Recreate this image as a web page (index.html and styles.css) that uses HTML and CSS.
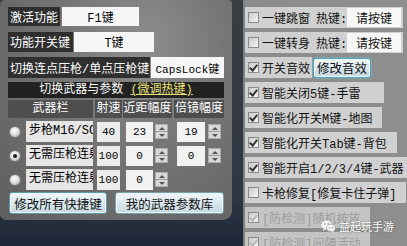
FILE: index.html
```
<!DOCTYPE html>
<html>
<head>
<meta charset="utf-8">
<link rel="stylesheet" href="styles.css">
</head>
<body>
<div class="screen">
  <div class="left-col">
    <div class="panel">
      <div class="row r1"><span class="lbl w1">激活功能</span><span class="inp i1">F1键</span></div>
      <div class="row r2"><span class="lbl w2">功能开关键</span><span class="inp i2">T键</span></div>
      <div class="row r3"><span class="lbl w3">切换连点压枪/单点压枪键</span><span class="inp i3">CapsLock键</span></div>
      <div class="hdr">切换武器与参数 <span class="hot">(微调热键)</span></div>
      <div class="cols">
        <span class="ch c-w">武器栏</span>
        <span class="ch c-r">射速</span>
        <span class="ch c-n">近距幅度</span>
        <span class="ch c-s">倍镜幅度</span>
      </div>
      <div class="wrow">
        <span class="radio-cell"><span class="radio"></span></span>
        <span class="name">步枪M16/SCAR</span>
        <span class="num rate">40</span>
        <span class="num near">23</span><span class="spin"><span class="up"></span><span class="dn"></span></span>
        <span class="num scope">19</span><span class="spin"><span class="up"></span><span class="dn"></span></span>
      </div>
      <div class="wrow">
        <span class="radio-cell"><span class="radio on"></span></span>
        <span class="name">无需压枪连射</span>
        <span class="num rate">100</span>
        <span class="num near">0</span><span class="spin"><span class="up"></span><span class="dn"></span></span>
        <span class="num scope">0</span><span class="spin"><span class="up"></span><span class="dn"></span></span>
      </div>
      <div class="wrow">
        <span class="radio-cell"><span class="radio"></span></span>
        <span class="name">无需压枪连射</span>
        <span class="num rate">100</span>
        <span class="num near">0</span><span class="spin"><span class="up"></span><span class="dn"></span></span>
      </div>
      <div class="btns">
        <span class="btn b1">修改所有快捷键</span>
        <span class="btn b2">我的武器参数库</span>
      </div>
    </div>
  </div>
  <div class="right">
    <div class="rrow wide"><span class="cb"></span><span class="rt">一键跳窗</span><span class="rt hk">热键:</span><span class="rinp">请按键</span></div>
    <div class="rrow wide"><span class="cb"></span><span class="rt">一键转身</span><span class="rt hk">热键:</span><span class="rinp">请按键</span></div>
    <div class="rline"><div class="rrow"><span class="cb on"></span><span class="rt">开关音效</span></div><span class="btn snd">修改音效</span></div>
    <div class="rrow pr"><span class="cb on"></span><span class="rt">智能关闭5键-手雷</span></div>
    <div class="rrow"><span class="cb on"></span><span class="rt">智能化开关M键-地图</span></div>
    <div class="rrow"><span class="cb on"></span><span class="rt">智能化开关Tab键-背包</span></div>
    <div class="rrow"><span class="cb on"></span><span class="rt">智能开启1/2/3/4键-武器</span></div>
    <div class="rrow"><span class="cb"></span><span class="rt">卡枪修复[修复卡住子弹]</span></div>
    <div class="rrow dis"><span class="cb on"></span><span class="rt">[防检测]随机按放</span></div>
    <div class="rrow dis"><span class="cb on"></span><span class="rt">[防检测]间隔活动</span></div>
  </div>
  <div class="wm">
    <svg width="15" height="13" viewBox="0 0 15 13"><ellipse cx="5.5" cy="5" rx="5.3" ry="4.4" fill="#fff" fill-opacity="0.85"/><path d="M2.5 8.3 L2 11 L4.6 9.2Z" fill="#fff" fill-opacity="0.85"/><ellipse cx="10" cy="8" rx="4.6" ry="3.8" fill="#fff" fill-opacity="0.85" stroke="#8a8a8a" stroke-width="0.6"/><path d="M12.4 10.8 L13.2 12.8 L10.8 11.4Z" fill="#fff" fill-opacity="0.85"/><circle cx="3.8" cy="4" r="0.7" fill="#777"/><circle cx="7.2" cy="4" r="0.7" fill="#777"/><circle cx="8.6" cy="7.6" r="0.6" fill="#777"/><circle cx="11.4" cy="7.6" r="0.6" fill="#777"/></svg>
    <span>益起玩手游</span>
  </div>
</div>
</body>
</html>
```
FILE: styles.css
```
html, body {
  margin: 0;
  padding: 0;
}
body {
  width: 407px;
  height: 246px;
  overflow: hidden;
  font-family: "Liberation Mono", "Noto Sans CJK SC", monospace;
  font-size: 12px;
}
.screen {
  position: relative;
  width: 407px;
  height: 246px;
  display: flex;
  background: linear-gradient(to bottom, #3c3f44 0%, #343a44 60%, #1e2a3a 100%);
}
.left-col {
  width: 243px;
  height: 246px;
  background: linear-gradient(to bottom, #3a3d42 0%, #2e3744 80%, #1c2636 100%);
}
.panel {
  width: 232px;
  height: 220px;
  box-sizing: border-box;
  padding: 7px 8px 0 8px;
  border-radius: 5px 4px 9px 6px;
  background: radial-gradient(ellipse at 62% 22%, #8e8e8e 0%, #767676 40%, #5e5e5e 100%);
  color: #fff;
}
.row {
  display: flex;
  align-items: stretch;
}
.r1 { height: 19px; margin-bottom: 6px; }
.r2 { height: 20px; margin-bottom: 5px; }
.r3 { height: 21px; margin-bottom: 4px; }
.lbl {
  background: #2f2f2f;
  color: #fff;
  padding-left: 2px;
  box-sizing: border-box;
  display: flex;
  align-items: center;
  white-space: nowrap;
  font-size: 12px;
}
.w1 { width: 52px; }
.w2 { width: 65px; }
.w3 { width: 143px; }
.inp {
  background: #f6f6f6;
  color: #000;
  display: flex;
  align-items: center;
  justify-content: center;
  white-space: nowrap;
}
.i1 { width: 77px; margin-left: 2px; }
.i2 { width: 80px; margin-left: 1px; }
.i3 { width: 74px; margin-left: 1px; font-size: 11px; }
.hdr {
  height: 16px;
  margin-bottom: 2px;
  background: #222;
  color: #fff;
  text-align: center;
  line-height: 16px;
  font-size: 12px;
}
.hot {
  color: #ece27a;
  text-decoration: underline;
}
.cols {
  height: 18px;
  margin-bottom: 3px;
  display: flex;
}
.ch {
  background: #4e4e4e;
  color: #fff;
  text-align: center;
  line-height: 18px;
  font-size: 12px;
  white-space: nowrap;
}
.c-w { width: 85px; }
.c-r { width: 27px; margin-left: 2px; }
.c-n { width: 49px; margin-left: 1px; }
.c-s { width: 50px; margin-left: 2px; }
.wrow {
  height: 21px;
  margin-bottom: 3px;
  display: flex;
  align-items: center;
}
.radio-cell {
  width: 18px;
  display: flex;
  align-items: center;
  padding-left: 1px;
  box-sizing: border-box;
}
.radio {
  width: 12px;
  height: 12px;
  box-sizing: border-box;
  border-radius: 50%;
  border: 1px solid #7a7a7a;
  background: radial-gradient(circle at 40% 35%, #ffffff 0%, #d8d8d8 55%, #a8a8a8 100%);
  position: relative;
}
.radio.on::after {
  content: "";
  position: absolute;
  left: 3px;
  top: 3px;
  width: 4px;
  height: 4px;
  border-radius: 50%;
  background: #1a1a1a;
}
.name {
  width: 67px;
  height: 21px;
  box-sizing: border-box;
  padding-left: 3px;
  background: #e6e6e6;
  color: #000;
  line-height: 21px;
  white-space: nowrap;
  overflow: hidden;
  font-size: 12px;
  flex: none;
}
.num {
  height: 20px;
  background: #f2f2f2;
  color: #000;
  display: flex;
  align-items: center;
  justify-content: center;
  font-size: 11px;
  flex: none;
}
.rate { width: 23px; margin-left: 4px; background: #ececec; }
.near { width: 27px; margin-left: 6px; }
.scope { width: 28px; margin-left: 9px; }
.spin {
  width: 13px;
  height: 15px;
  margin-left: 2px;
  box-sizing: border-box;
  border: 1px solid #ababab;
  background: #d8d8d8;
  display: flex;
  flex-direction: column;
  flex: none;
}
.scope + .spin { margin-left: 3px; }
.spin .up, .spin .dn {
  flex: 1;
  display: flex;
  align-items: center;
  justify-content: center;
}
.spin .up { border-bottom: 1px solid #9a9a9a; }
.spin .up::before {
  content: "";
  border-left: 3px solid transparent;
  border-right: 3px solid transparent;
  border-bottom: 3px solid #555;
}
.spin .dn::before {
  content: "";
  border-left: 3px solid transparent;
  border-right: 3px solid transparent;
  border-top: 3px solid #555;
}
.btns {
  margin-top: -1px;
  height: 22px;
  display: flex;
}
.btn {
  height: 22px;
  box-sizing: border-box;
  border: 1px solid #5f9aa9;
  border-radius: 3px;
  background: linear-gradient(to bottom, #f1f7f9 0%, #dbe8ed 50%, #c5d8df 100%);
  box-shadow: inset 0 0 0 1px #eaf6f9;
  color: #111;
  display: flex;
  align-items: center;
  justify-content: center;
  font-size: 12.5px;
  white-space: nowrap;
}
.b1 { width: 98px; margin-left: 1px; }
.b2 { width: 109px; margin-left: 8px; border-color: #7a9ea8; }
.right {
  width: 164px;
  height: 246px;
  box-sizing: border-box;
  padding-top: 7px;
  background: linear-gradient(to right, #7a7a7a 0px, #8c8c8c 3px, #8e8e8e 100%);
  color: #111;
}
.rrow {
  height: 21px;
  margin: 0 0 4px 2px;
  padding: 0 10px 0 3px;
  width: fit-content;
  display: flex;
  align-items: center;
  background: #d0d0d0;
  white-space: nowrap;
  font-size: 12px;
}
.rrow.wide {
  width: 158px;
  box-sizing: border-box;
  padding-right: 2px;
}
.rrow.pr { padding-right: 24px; }
.rline {
  display: flex;
  align-items: center;
  margin-bottom: 4px;
  height: 21px;
}
.rline .rrow { margin-bottom: 0; padding-right: 2px; }
.rt { margin-left: 3px; }
.hk { margin-left: 6px; }
.rinp {
  margin-left: auto;
  width: 56px;
  height: 19px;
  background: #f7f7f7;
  display: flex;
  align-items: center;
  justify-content: center;
}
.btn.snd {
  width: 58px;
  height: 20px;
  margin-left: 1px;
  border-color: #4ea5b8;
  box-shadow: 0 0 2px #7fd3e4, inset 0 0 0 1px #eef9fb;
}
.cb {
  width: 11px;
  height: 11px;
  box-sizing: border-box;
  border: 1px solid #8a8a8a;
  background: linear-gradient(to bottom right, #c9c9c9, #f6f6f6);
  position: relative;
  flex: none;
}
.cb.on::after {
  content: "";
  position: absolute;
  left: 2px;
  top: 0px;
  width: 3px;
  height: 6px;
  border-right: 2px solid #333;
  border-bottom: 2px solid #333;
  transform: rotate(40deg);
}
.dis { background: #c4c4c4; }
.dis .rt { color: #9c9c9c; }
.dis .cb.on::after { border-color: #b4b4b4; }
.wm {
  position: absolute;
  left: 321px;
  top: 218px;
  display: flex;
  align-items: center;
  gap: 3px;
  color: #fff;
  font-family: "Noto Sans CJK SC", sans-serif;
  font-size: 11px;
  text-shadow: 0 0 2px #555;
}
```
